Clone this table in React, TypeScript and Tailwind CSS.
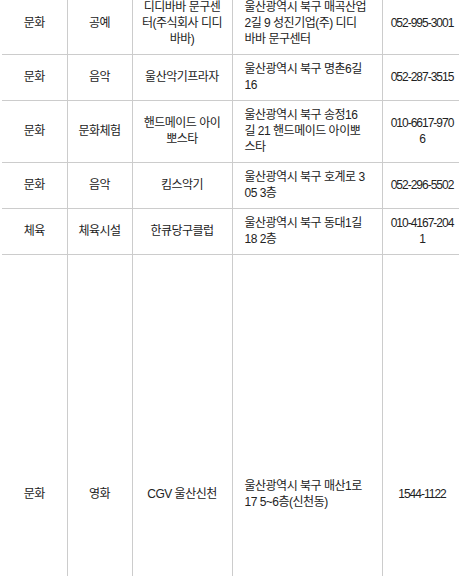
import React from 'react';

type Row = {
  cat: string;
  sub: string;
  name: string;
  addr: string;
  tel: string;
  tall?: boolean;
};

const rows: Row[] = [
  { cat: '문화', sub: '공예', name: '디디바바 문구센터(주식회사 디디바바)', addr: '울산광역시 북구 매곡산업2길 9 성진기업(주) 디디바바 문구센터', tel: '052-995-3001' },
  { cat: '문화', sub: '음악', name: '울산악기프라자', addr: '울산광역시 북구 명촌6길 16', tel: '052-287-3515' },
  { cat: '문화', sub: '문화체험', name: '핸드메이드 아이뽀스타', addr: '울산광역시 북구 송정16길 21 핸드메이드 아이뽀스타', tel: '010-6617-9706' },
  { cat: '문화', sub: '음악', name: '킴스악기', addr: '울산광역시 북구 호계로 305 3층', tel: '052-296-5502' },
  { cat: '체육', sub: '체육시설', name: '한큐당구클럽', addr: '울산광역시 북구 동대1길 18 2층', tel: '010-4167-2041' },
  { cat: '문화', sub: '영화', name: 'CGV 울산신천', addr: '울산광역시 북구 매산1로 17 5~6층(신천동)', tel: '1544-1122', tall: true },
];

const cell = 'border-r border-b border-[#cccccc] pt-[6px] pb-[7px] align-middle break-all';

export default function App() {
  return (
    <div className="w-[459px] h-[576px] overflow-hidden bg-white">
      <table
        className="table-fixed border-collapse ml-[2px] mt-[-7px] w-[460px] text-[12px] leading-[16px] tracking-[-0.5px] text-[#222222]"
        style={{ fontFamily: '"Liberation Sans", "Noto Sans CJK KR", sans-serif' }}
      >
        <colgroup>
          <col className="w-[65px]" />
          <col className="w-[65px]" />
          <col className="w-[100px]" />
          <col className="w-[150px]" />
          <col className="w-[80px]" />
        </colgroup>
        <tbody>
          {rows.map((r, i) => (
            <tr key={i} className={r.tall ? 'h-[480px]' : ''}>
              <td className={`${cell} px-[4px] text-center`}>{r.cat}</td>
              <td className={`${cell} px-[4px] text-center`}>{r.sub}</td>
              <td className={`${cell} px-[6px] text-center`}>{r.name}</td>
              <td className={`${cell} pl-[12px] pr-[15px] text-left`}>{r.addr}</td>
              <td className={`${cell} px-[7px] text-center tracking-[-1px]`}>{r.tel}</td>
            </tr>
          ))}
        </tbody>
      </table>
    </div>
  );
}
